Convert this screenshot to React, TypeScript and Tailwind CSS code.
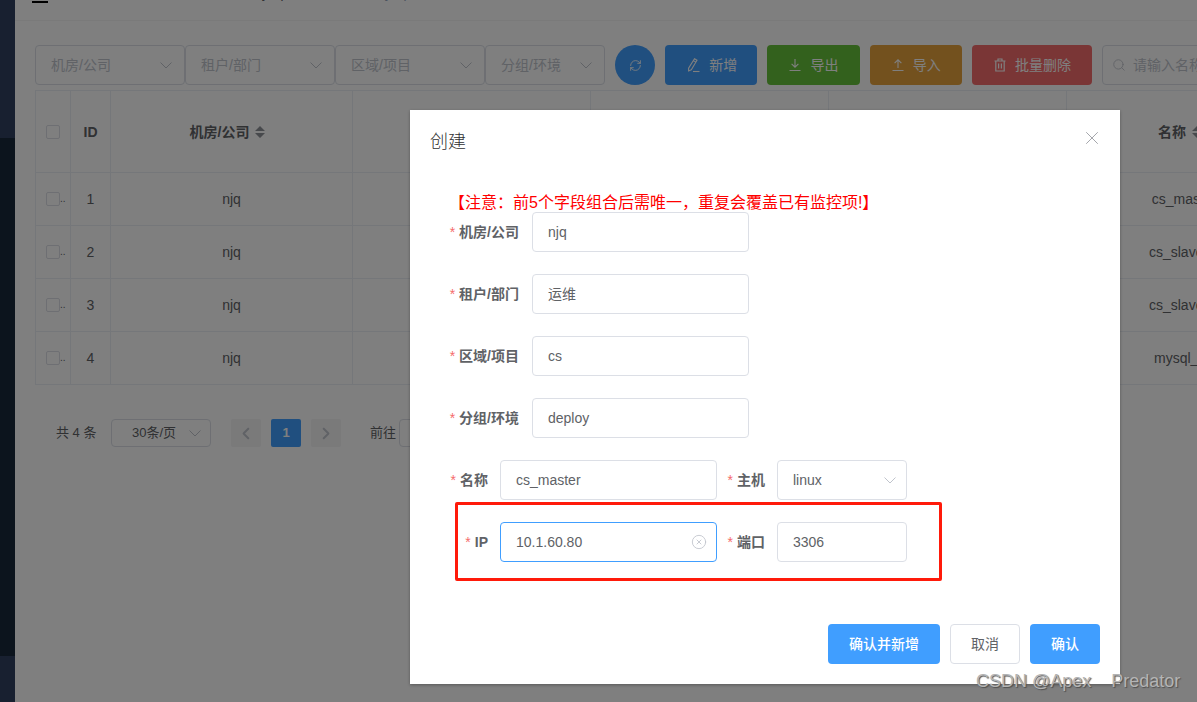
import React from 'react';
import { CircleX, RefreshCw, Search, X } from 'lucide-react';

const FONT = "font-['Liberation_Sans','Noto_Sans_CJK_SC',sans-serif]";

const rows = [
  { id: 1, name: 'cs_master' },
  { id: 2, name: 'cs_slave01' },
  { id: 3, name: 'cs_slave02' },
  { id: 4, name: 'mysql_01' },
];

function Chevron({ className }: { className?: string }) {
  return (
    <svg viewBox="0 0 12 7" className={`h-[7px] w-3 shrink-0 ${className ?? ''}`} fill="none" stroke="currentColor" strokeWidth="1">
      <path d="M0.5 0.5 L6 6 L11.5 0.5" />
    </svg>
  );
}

function SortCaret() {
  return (
    <svg viewBox="0 0 10 12" className="ml-1.5 h-3 w-2.5 shrink-0 fill-[#8f9298]">
      <path d="M5 0 L10 5 H0 Z M5 12 L0 7 H10 Z" />
    </svg>
  );
}

function EditIcon() {
  return (
    <svg viewBox="0 0 16 16" className="h-4 w-4" fill="none" stroke="currentColor" strokeWidth="1.1">
      <path d="M9.5 1.8 L12 3.3 L6.3 12.8 L3.6 14 L3.6 11.2 Z M8.4 3.6 L10.9 5.1" />
      <path d="M8 14.5 H14.5" />
    </svg>
  );
}

function DownloadIcon() {
  return (
    <svg viewBox="0 0 14 14" className="h-3.5 w-3.5" fill="none" stroke="currentColor" strokeWidth="1.1">
      <path d="M7 1 V9 M3.6 5.8 L7 9.2 L10.4 5.8 M1.5 12.5 H12.5" />
    </svg>
  );
}

function UploadIcon() {
  return (
    <svg viewBox="0 0 14 14" className="h-3.5 w-3.5" fill="none" stroke="currentColor" strokeWidth="1.1">
      <path d="M7 10 V2 M3.6 5.2 L7 1.8 L10.4 5.2 M1.5 12.5 H12.5" />
    </svg>
  );
}

function TrashIcon() {
  return (
    <svg viewBox="0 0 14 14" className="h-3.5 w-3.5" fill="none" stroke="currentColor" strokeWidth="1.2">
      <path d="M1.5 3 H12.5 M5 3 V1 H9 V3 M2.8 3 V13 H11.2 V3 M5.6 5.5 V10.5 M8.4 5.5 V10.5" />
    </svg>
  );
}

function FilterSelect({ label, width }: { label: string; width: string }) {
  return (
    <div className={`flex h-10 items-center justify-between rounded border border-[#dcdfe6] pl-[15px] pr-3 text-sm text-[#c0c4cc] ${width}`}>
      <span>{label}</span>
      <Chevron />
    </div>
  );
}

function ToolButton({ color, width, icon, label }: { color: string; width: string; icon: React.ReactNode; label: string }) {
  return (
    <div className={`flex h-10 shrink-0 items-center justify-center gap-2 rounded text-sm text-white ${color} ${width}`}>
      {icon}
      <span>{label}</span>
    </div>
  );
}

function Checkbox() {
  return <span className="block h-3.5 w-3.5 shrink-0 rounded-[2px] border border-[#dcdfe6] bg-white" />;
}

function HeadCell({ label }: { label: string }) {
  return (
    <th className="border border-[#ebeef5] font-bold">
      <div className="flex items-center justify-center pr-2">
        <span>{label}</span>
        <SortCaret />
      </div>
    </th>
  );
}

function Field({ label, labelClass, inputWidth, value, focused, select }: {
  label: string;
  labelClass: string;
  inputWidth: string;
  value: string;
  focused?: boolean;
  select?: boolean;
}) {
  return (
    <>
      <div className={`flex h-10 shrink-0 items-center justify-end text-sm font-bold text-[#606266] ${labelClass}`}>
        <span className="mr-1 font-normal text-[#f56c6c]">*</span>
        <span>{label}</span>
      </div>
      <div className={`flex h-10 shrink-0 items-center justify-between rounded border pl-[15px] text-sm text-[#606266] ${focused ? 'border-[#409eff] pr-[9px]' : 'border-[#dcdfe6] pr-[10px]'} ${inputWidth}`}>
        <span>{value}</span>
        {focused && <CircleX size={16} strokeWidth={1.3} className="text-[#c0c4cc]" />}
        {select && <Chevron className="text-[#c0c4cc]" />}
      </div>
    </>
  );
}

export default function App() {
  return (
    <div className={`relative flex h-[702px] w-[1197px] overflow-hidden bg-white ${FONT}`}>
      <aside className="flex w-[15px] shrink-0 flex-col">
        <div className="h-[138px] bg-[#304060]" />
        <div className="flex-1 bg-[#18283a]" />
        <div className="h-[46px] bg-[#304060]" />
      </aside>

      <main className="min-w-0 flex-1">
        <header className="flex h-[21px] items-end overflow-hidden border-b border-[#f4f4f4] pb-[17px] text-sm leading-5">
          <span className="ml-[17px] h-5 w-4 border-b-2 border-black" />
          <span className="ml-[117px] w-[85px] whitespace-nowrap font-bold text-[#303133]">资源监控平台</span>
          <span className="whitespace-pre text-[#606266]">Mysql  /  监控</span>
          <span className="ml-[39px] whitespace-pre text-[#97a8be]">Mysql  /  监控</span>
        </header>

        <div className="pl-5 pt-6">
          <div className="flex gap-2.5">
            <div className="flex">
              <FilterSelect label="机房/公司" width="w-[150px]" />
              <FilterSelect label="租户/部门" width="w-[150px]" />
              <FilterSelect label="区域/项目" width="w-[150px]" />
              <FilterSelect label="分组/环境" width="w-[120px]" />
            </div>
            <div className="flex h-10 w-10 shrink-0 items-center justify-center rounded-full bg-[#409eff] text-white">
              <RefreshCw size={13} strokeWidth={1.6} />
            </div>
            <ToolButton color="bg-[#409eff]" width="w-[92.3px]" icon={<EditIcon />} label="新增" />
            <ToolButton color="bg-[#67c23a]" width="w-[92.3px]" icon={<DownloadIcon />} label="导出" />
            <ToolButton color="bg-[#e6a23c]" width="w-[92.3px]" icon={<UploadIcon />} label="导入" />
            <ToolButton color="bg-[#f56c6c]" width="w-[120px]" icon={<TrashIcon />} label="批量删除" />
            <div className="flex h-10 w-[200px] shrink-0 items-center rounded border border-[#dcdfe6] pl-[9px] text-sm text-[#c0c4cc]">
              <Search size={14} strokeWidth={1.5} />
              <span className="ml-[7px] whitespace-nowrap">请输入名称</span>
            </div>
          </div>

          <table className="mt-[5px] w-[1266px] table-fixed border-collapse text-center text-sm text-[#606266]">
            <colgroup>
              <col className="w-[35px]" />
              <col className="w-[40px]" />
              <col className="w-[242px]" />
              <col className="w-[238px]" />
              <col className="w-[238px]" />
              <col className="w-[238px]" />
              <col className="w-[235px]" />
            </colgroup>
            <thead>
              <tr className="h-[82px]">
                <th className="border border-[#ebeef5] pl-2.5"><Checkbox /></th>
                <th className="border border-[#ebeef5] font-bold">ID</th>
                <HeadCell label="机房/公司" />
                <HeadCell label="租户/部门" />
                <HeadCell label="区域/项目" />
                <HeadCell label="分组/环境" />
                <HeadCell label="名称" />
              </tr>
            </thead>
            <tbody>
              {rows.map((row) => (
                <tr key={row.id} className="h-[53px]">
                  <td className="border border-[#ebeef5] pl-2.5">
                    <div className="flex items-center">
                      <Checkbox />
                      <span className="text-[10px] leading-none">..</span>
                    </div>
                  </td>
                  <td className="border border-[#ebeef5]">{row.id}</td>
                  <td className="border border-[#ebeef5]">njq</td>
                  <td className="border border-[#ebeef5]">运维</td>
                  <td className="border border-[#ebeef5]">cs</td>
                  <td className="border border-[#ebeef5]">deploy</td>
                  <td className="border border-[#ebeef5]">{row.name}</td>
                </tr>
              ))}
            </tbody>
          </table>

          <div className="mt-[34px] flex h-7 items-center pl-[21px] text-[13px] text-[#606266]">
            <span className="w-[55px] whitespace-nowrap">共 4 条</span>
            <div className="flex h-7 w-[100px] items-center justify-between rounded border border-[#dcdfe6] pl-[20px] pr-[9px]">
              <span>30条/页</span>
              <Chevron className="text-[#c0c4cc]" />
            </div>
            <div className="ml-5 flex h-7 w-[30px] items-center justify-center rounded-[2px] bg-[#f4f4f5] text-[#c0c4cc]">
              <Chevron className="rotate-90 stroke-2" />
            </div>
            <div className="ml-2.5 flex h-7 w-[30px] items-center justify-center rounded-[2px] bg-[#409eff] font-bold text-white">1</div>
            <div className="ml-2.5 flex h-7 w-[30px] items-center justify-center rounded-[2px] bg-[#f4f4f5] text-[#c0c4cc]">
              <Chevron className="-rotate-90 stroke-2" />
            </div>
            <span className="ml-[29px]">前往</span>
            <div className="ml-[3px] h-7 w-[46px] rounded border border-[#dcdfe6]" />
          </div>
        </div>
      </main>

      <div className="absolute inset-0 bg-black/50 pl-[410px] pt-[110px]">
        <div className="relative flex h-[574px] w-[710px] flex-col bg-white shadow-[0_1px_3px_rgba(0,0,0,0.3)]">
          <div className="flex items-start justify-between pl-5 pr-[17px] pt-5">
            <span className="text-lg font-light leading-6 text-[#303133]">创建</span>
            <X size={22} strokeWidth={0.9} className="-mt-[3px] text-[#909399]" />
          </div>

          <p className="ml-[39px] mt-[39px] h-[19px] whitespace-nowrap text-base leading-5 text-[#ff0000]">【注意：前5个字段组合后需唯一，重复会覆盖已有监控项!】</p>

          <div className="flex flex-col gap-[22px]">
            <div className="flex">
              <Field label="机房/公司" labelClass="w-[122px] pr-[13px]" inputWidth="w-[217px]" value="njq" />
            </div>
            <div className="flex">
              <Field label="租户/部门" labelClass="w-[122px] pr-[13px]" inputWidth="w-[217px]" value="运维" />
            </div>
            <div className="flex">
              <Field label="区域/项目" labelClass="w-[122px] pr-[13px]" inputWidth="w-[217px]" value="cs" />
            </div>
            <div className="flex">
              <Field label="分组/环境" labelClass="w-[122px] pr-[13px]" inputWidth="w-[217px]" value="deploy" />
            </div>
            <div className="flex">
              <Field label="名称" labelClass="w-[90px] pr-3" inputWidth="w-[217px]" value="cs_master" />
              <Field label="主机" labelClass="w-[60px] pr-3" inputWidth="w-[130px]" value="linux" select />
            </div>
            <div className="flex">
              <Field label="IP" labelClass="w-[90px] pr-3" inputWidth="w-[217px]" value="10.1.60.80" focused />
              <Field label="端口" labelClass="w-[60px] pr-3" inputWidth="w-[130px]" value="3306" />
            </div>
          </div>

          <div className="mt-auto flex justify-end gap-2.5 pb-5 pr-5 text-sm">
            <div className="flex h-10 w-[112px] items-center justify-center rounded bg-[#409eff] font-medium text-white">确认并新增</div>
            <div className="flex h-10 w-[70px] items-center justify-center rounded border border-[#dcdfe6] text-[#606266]">取消</div>
            <div className="flex h-10 w-[70px] items-center justify-center rounded bg-[#409eff] font-medium text-white">确认</div>
          </div>

          {/* annotation box drawn over the screenshot */}
          <div className="absolute left-[45px] top-[392px] h-[79px] w-[487px] rounded-[2px] border-[3px] border-[#ff1a0a]" />
        </div>
      </div>

      {/* watermark */}
      <span className="absolute left-[976px] top-[670px] whitespace-pre text-lg leading-[22px] text-[#b4b4b4] [text-shadow:1px_1px_1px_#505050]">CSDN @Apex    Predator</span>
    </div>
  );
}
